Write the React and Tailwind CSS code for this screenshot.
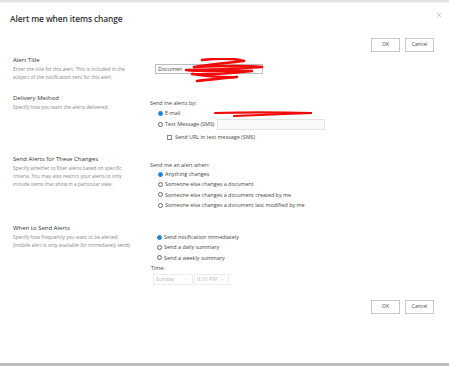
import { X, ChevronDown } from 'lucide-react';

const Radio = ({ checked = false }) => (
  <span
    className={`inline-flex h-[5px] w-[5px] shrink-0 items-center justify-center rounded-full border-[0.5px] ${
      checked ? 'border-[#0078d4]' : 'border-[#666]'
    } bg-white`}
  >
    {checked && <span className="h-[3px] w-[3px] rounded-full bg-[#0078d4]" />}
  </span>
);

const Option = ({ checked, children, className = '' }) => (
  <div className={`flex h-[10.3px] items-center gap-[2px] pl-[8px] text-[#444] ${className}`}>
    <Radio checked={checked} />
    <span>{children}</span>
  </div>
);

const Btn = ({ children }) => (
  <button className="flex h-[14px] w-[29px] items-center justify-center border border-[#c8c8c8] bg-white text-[5px] text-[#444]">
    {children}
  </button>
);

const Section = ({ label, desc, height, rightPt, children }) => (
  <div className="flex" style={{ height }}>
    <div className="w-[137px] shrink-0 pl-[13px]">
      <div className="text-[6px] leading-[8px] text-[#333]">{label}</div>
      <div className="mt-[1px] text-[4.9px] leading-[8px] text-[#888]">{desc}</div>
    </div>
    <div className="flex-1 pl-[13px]" style={{ paddingTop: rightPt }}>
      {children}
    </div>
  </div>
);

const App = () => {
  return (
    <div
      className="flex h-[366px] w-[449px] flex-col overflow-hidden bg-[#e6e6e6]"
      style={{ fontFamily: '"Open Sans", "Noto Sans", sans-serif' }}
    >
      <div className="h-[3px] bg-gradient-to-b from-[#dcdcdc] to-[#f2f2f2]" />
      <div className="relative flex-1 bg-white text-[5.4px]">
        {/* Header */}
        <div className="flex items-start justify-between pl-[10px] pr-[6px] pt-[9px]">
          <h1 className="text-[8.4px] font-semibold leading-[14px] tracking-[-0.1px] text-[#333]">
            Alert me when items change
          </h1>
          <X className="mt-[-1px] h-[8px] w-[8px] text-[#888]" strokeWidth={1.2} />
        </div>

        <div className="mt-[12px] flex justify-end gap-[5px] pr-[15px]">
          <Btn>OK</Btn>
          <Btn>Cancel</Btn>
        </div>

        <div className="mt-[4px]">
          <Section
            label="Alert Title"
            desc={<>Enter the title for this alert. This is included in the subject of the notification sent for this alert.</>}
            height={38}
            rightPt={8}
          >
            <div className="relative ml-[5px] flex h-[10px] w-[108px] items-center border border-[#bdbdbd] pl-[2px] text-[#444]">
              Documen
              <svg className="absolute left-[26px] top-[-7px]" width="84" height="25" viewBox="0 0 84 25">
                <path
                  d="M20 2 C40 0 55 1 62 3 C45 5 30 6 12 9 C35 8 60 7 80 9 C55 11 30 12 4 12 C20 14 45 12 70 13 C50 15 30 17 10 16 C25 18 40 20 55 19 C35 21 22 22 15 23"
                  fill="none"
                  stroke="#f00a0a"
                  strokeWidth="2.6"
                  strokeLinecap="round"
                  strokeLinejoin="round"
                />
              </svg>
            </div>
          </Section>

          <Section
            label="Delivery Method"
            desc="Specify how you want the alerts delivered."
            height={61}
            rightPt={5}
          >
            <div className="h-[9px] leading-[9px] text-[#444]">Send me alerts by:</div>
            <div className="relative flex h-[11px] items-center gap-[2px] pl-[8px] text-[#444]">
              <Radio checked />
              <span>E-mail</span>
              <svg className="absolute left-[64px] top-[2px]" width="100" height="8" viewBox="0 0 100 8">
                <path d="M1 3 C30 2 60 2 98 3 C70 4 40 5 20 6" fill="none" stroke="#f00a0a" strokeWidth="2.2" strokeLinecap="round" />
              </svg>
            </div>
            <div className="flex h-[11px] items-center gap-[2px] pl-[8px] text-[#444]">
              <Radio />
              <span>Text Message (SMS)</span>
              <div className="ml-[1px] h-[11px] w-[108px] border border-[#e3e3e3] bg-[#fafafa]" />
            </div>
            <div className="mt-[2px] flex h-[10px] items-center gap-[3px] pl-[17px] text-[#444]">
              <span className="h-[5px] w-[5px] border-[0.5px] border-[#888] bg-white" />
              <span>Send URL in text message (SMS)</span>
            </div>
          </Section>

          <Section
            label="Send Alerts for These Changes"
            desc="Specify whether to filter alerts based on specific criteria. You may also restrict your alerts to only include items that show in a particular view."
            height={69}
            rightPt={6}
          >
            <div className="h-[8px] leading-[8px] text-[#444]">Send me an alert when:</div>
            <Option checked>Anything changes</Option>
            <Option>Someone else changes a document</Option>
            <Option>Someone else changes a document created by me</Option>
            <Option>Someone else changes a document last modified by me</Option>
          </Section>

          <Section
            label="When to Send Alerts"
            desc="Specify how frequently you want to be alerted. (mobile alert is only available for immediately send)"
            height={66}
            rightPt={8}
          >
            <div>
              <Option checked className="!pl-[7px]">Send notification immediately</Option>
              <Option className="!pl-[7px]">Send a daily summary</Option>
              <Option className="!pl-[7px]">Send a weekly summary</Option>
              <div className="h-[9px] pl-[1px] leading-[10px] text-[#444]">Time:</div>
              <div className="mt-[2px] flex gap-[1px] pl-[3px]">
                <div className="flex h-[11px] w-[40px] items-center justify-between border border-[#ececec] pl-[2px] pr-[3px] text-[#bbb]">
                  Sunday
                  <ChevronDown className="h-[5px] w-[5px]" strokeWidth={1.5} />
                </div>
                <div className="flex h-[11px] w-[35px] items-center justify-between border border-[#ececec] pl-[2px] pr-[3px] text-[#bbb]">
                  8:00 PM
                  <ChevronDown className="h-[5px] w-[5px]" strokeWidth={1.5} />
                </div>
              </div>
            </div>
          </Section>
        </div>

        <div className="mt-[10px] flex justify-end gap-[5px] pr-[15px]">
          <Btn>OK</Btn>
          <Btn>Cancel</Btn>
        </div>
      </div>
      <div className="h-[3px] bg-[#bdbdbd]" />
    </div>
  );
};

export default App;
